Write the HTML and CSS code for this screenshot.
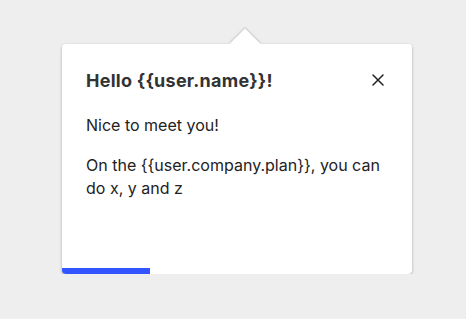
FILE: index.html
```html
<!DOCTYPE html>
<html lang="en">
<head>
  <meta charset="UTF-8" />
  <title>Tour step</title>
  <link rel="stylesheet" href="styles.css">
</head>
<body>
  <div class="popover">
    <div class="arrow"></div>
    <div class="content">
      <div class="header">
        <h2>Hello {{user.name}}!</h2>
        <button class="close" aria-label="Close">
          <svg width="12" height="12" viewBox="0 0 12 12">
            <path d="M1 1 L11 11 M11 1 L1 11" stroke="#222" stroke-width="1.5" stroke-linecap="round"/>
          </svg>
        </button>
      </div>
      <p>Nice to meet you!</p>
      <p>On the {{user.company.plan}}, you can do x, y and z</p>
    </div>
    <div class="progress">
      <div class="progress-bar" style="width: 25%"></div>
    </div>
  </div>
</body>
</html>
```

FILE: styles.css
```css
body {
  margin: 0;
  background: #eeeeee;
  font-family: Inter, 'Noto Sans', sans-serif;
  color: #222;
}

.popover {
  position: relative;
  width: 350px;
  height: 230px;
  margin: 44px 0 0 62px;
  background: white;
  border-radius: 4px;
  box-shadow: 0 1px 3px rgba(0, 0, 0, 0.3);
  display: flex;
  flex-direction: column;
}

.arrow {
  position: absolute;
  top: -11px;
  left: 172px;
  width: 22px;
  height: 22px;
  background: white;
  transform: rotate(45deg);
  box-shadow: -1px -1px 2px rgba(0, 0, 0, 0.15);
}

.content {
  position: relative;
  flex: 1;
  padding: 25px 24px 0 24px;
  background: white;
  border-radius: 4px 4px 0 0;
}

.header {
  display: flex;
  justify-content: space-between;
  align-items: center;
  margin-bottom: 21px;
}

h2 {
  margin: 0;
  font-size: 18px;
  line-height: 24px;
  font-weight: 700;
  letter-spacing: 0.25px;
  color: #333;
}

.close {
  border: none;
  background: none;
  padding: 0;
  margin: -2px 4px 0 0;
  width: 12px;
  height: 12px;
  display: flex;
  cursor: pointer;
}

p {
  margin: 0 0 17px 0;
  font-size: 16px;
  line-height: 23px;
}

.progress {
  height: 6px;
  border-radius: 0 0 4px 4px;
  overflow: hidden;
}

.progress-bar {
  height: 100%;
  background: #3355ff;
}
```
